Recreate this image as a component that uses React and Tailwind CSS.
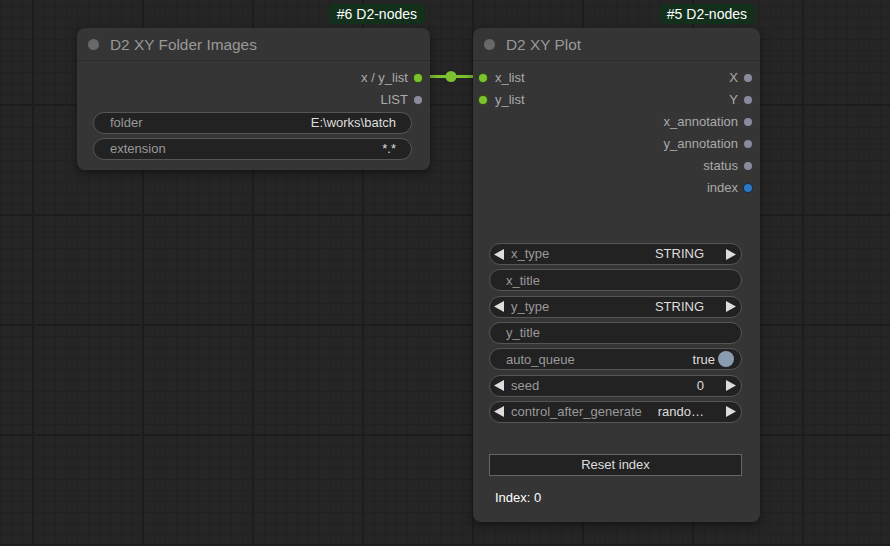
import React from 'react';

const font = { fontFamily: '"Liberation Sans", Arial, sans-serif' };

function Dot({ color }) {
  return <span className={`block w-[10px] h-[10px] rounded-full border border-black/60 ${color}`} />;
}

function LeftArrow() {
  return (
    <svg width="10" height="11" viewBox="0 0 10 11" className="shrink-0">
      <path d="M0 5.5 L10 0 L10 11 Z" fill="#dddddd" />
    </svg>
  );
}

function RightArrow() {
  return (
    <svg width="10" height="11" viewBox="0 0 10 11" className="shrink-0">
      <path d="M10 5.5 L0 0 L0 11 Z" fill="#dddddd" />
    </svg>
  );
}

function TextWidget({ label, value }) {
  return (
    <div className="flex items-center h-[22px] rounded-full border border-[#555] bg-[#222] pl-4 pr-[15px] text-[13px]">
      <span className="text-[#999]">{label}</span>
      <span className="ml-auto text-[#ddd]">{value}</span>
    </div>
  );
}

function ComboWidget({ label, value }) {
  return (
    <div className="flex items-center h-[22px] rounded-full border border-[#555] bg-[#222] pl-1 pr-[5px] text-[13px]">
      <LeftArrow />
      <span className="ml-[7px] text-[#999]">{label}</span>
      <span className="ml-auto mr-[22px] text-[#ddd]">{value}</span>
      <RightArrow />
    </div>
  );
}

function Badge({ text }) {
  return (
    <div className="absolute -top-[24px] right-[5px] h-[20px] px-2 rounded-[5px] bg-[#12301b] text-white text-[14px] leading-[20px]">
      {text}
    </div>
  );
}

function Title({ text }) {
  return (
    <div className="flex items-center h-[33px] pt-[1px] border-b border-[#2c2c2c] pl-[11px]">
      <span className="block w-[11px] h-[11px] rounded-full bg-[#686868]" />
      <span className="ml-[11px] text-[15.4px] text-[#999]">{text}</span>
    </div>
  );
}

function OutRow({ label, color }) {
  return (
    <div className="flex items-center justify-end h-[22px] gap-[5px]">
      <span className="text-[13px] text-[#aaa]">{label}</span>
      <Dot color={color} />
    </div>
  );
}

function InRow({ label }) {
  return (
    <div className="flex items-center h-[22px] gap-[7px]">
      <Dot color="bg-[#7cc22f]" />
      <span className="text-[13px] text-[#aaa]">{label}</span>
    </div>
  );
}

export default function App() {
  return (
    <div
      style={font}
      className="relative w-[890px] h-[546px] overflow-hidden bg-[#252525] bg-[linear-gradient(to_right,#1d1d1d_2px,transparent_2px),linear-gradient(to_bottom,#1d1d1d_2px,transparent_2px),linear-gradient(to_right,#212121_1px,transparent_1px),linear-gradient(to_bottom,#212121_1px,transparent_1px)] bg-size-[110px_110px,110px_110px,11px_11px,11px_11px] bg-position-[32px_104px,32px_104px,0px_6px,0px_6px]"
    >
      {/* wire */}
      <svg className="absolute left-0 top-0" width="890" height="546">
        <line x1="418" y1="76.5" x2="483" y2="76.5" stroke="#7cc22f" strokeWidth="3" />
        <circle cx="451" cy="76.5" r="5.5" fill="#7cc22f" />
      </svg>

      {/* #6 D2 XY Folder Images */}
      <div className="absolute left-[77px] top-[28px] w-[353px] h-[142px] rounded-[8px] bg-[#353535] shadow-[0_3px_10px_rgba(0,0,0,0.45)]">
        <Badge text="#6 D2-nodes" />
        <Title text="D2 XY Folder Images" />
        <div className="pt-[6px] pr-[7px]">
          <OutRow label="x / y_list" color="bg-[#7cc22f]" />
          <OutRow label="LIST" color="bg-[#8a8a9c]" />
        </div>
        <div className="mt-[1px] ml-4 mr-[18px] flex flex-col gap-[4px]">
          <TextWidget label="folder" value="E:\works\batch" />
          <TextWidget label="extension" value="*.*" />
        </div>
      </div>

      {/* #5 D2 XY Plot */}
      <div className="absolute left-[473px] top-[28px] w-[287px] h-[494px] rounded-[8px] bg-[#353535] shadow-[0_3px_10px_rgba(0,0,0,0.45)]">
        <Badge text="#5 D2-nodes" />
        <Title text="D2 XY Plot" />
        <div className="flex justify-between pt-[6px] pl-[5px] pr-[7px]">
          <div>
            <InRow label="x_list" />
            <InRow label="y_list" />
          </div>
          <div>
            <OutRow label="X" color="bg-[#8a8a9c]" />
            <OutRow label="Y" color="bg-[#8a8a9c]" />
            <OutRow label="x_annotation" color="bg-[#8a8a9c]" />
            <OutRow label="y_annotation" color="bg-[#8a8a9c]" />
            <OutRow label="status" color="bg-[#8a8a9c]" />
            <OutRow label="index" color="bg-[#2b78c4]" />
          </div>
        </div>
        <div className="mt-[44px] ml-4 mr-[18px] flex flex-col gap-[4.33px]">
          <ComboWidget label="x_type" value="STRING" />
          <TextWidget label="x_title" value="" />
          <ComboWidget label="y_type" value="STRING" />
          <TextWidget label="y_title" value="" />
          <div className="flex items-center h-[22px] rounded-full border border-[#555] bg-[#222] pl-4 pr-[7px] text-[13px]">
            <span className="text-[#999]">auto_queue</span>
            <span className="ml-auto text-[#ddd]">true</span>
            <span className="block ml-[3px] w-[16px] h-[16px] rounded-full bg-[#8a9bb2]" />
          </div>
          <ComboWidget label="seed" value="0" />
          <ComboWidget label="control_after_generate" value="rando…" />
        </div>
        <div className="mt-[31px] ml-4 mr-[18px] h-[22px] flex items-center justify-center border border-[#666] bg-[#222] text-[13px] text-[#ddd]">
          Reset index
        </div>
        <div className="mt-[11px] pl-[22px] h-[22px] flex items-center text-[13px] text-white">Index: 0</div>
      </div>
    </div>
  );
}
